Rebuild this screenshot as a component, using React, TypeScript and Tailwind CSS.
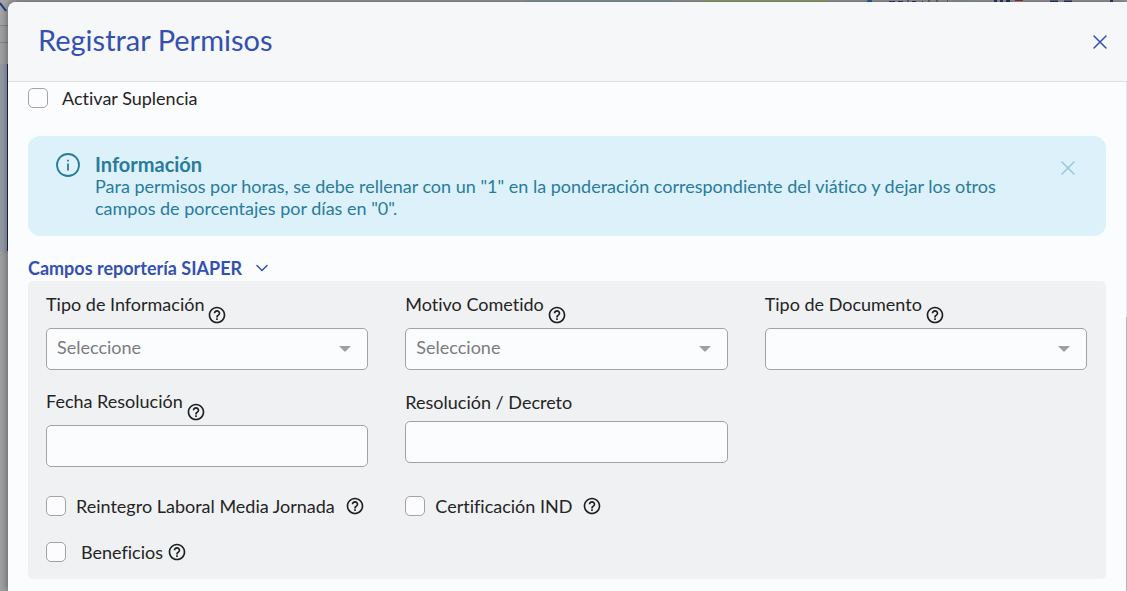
import { useState } from "react";
import type { ReactNode } from "react";
import { MdHelpOutline } from "react-icons/md";

type FieldProps = {
  id: string;
  label: string;
  help?: boolean;
  children: ReactNode;
};

const Help = () => (
  <MdHelpOutline aria-hidden="true" className="size-5 shrink-0 text-[#1f1f1f]" />
);

const CloseIcon = ({ className }: { className: string }) => (
  <svg viewBox="0 0 14 14" fill="none" stroke="currentColor" strokeWidth="1.500" strokeLinecap="round" className={className}>
    <path d="M1 1 13 13M13 1 1 13" />
  </svg>
);

const Field = ({ id, label, help, children }: FieldProps) => (
  <div>
    {help ? (
      <div className="mb-[3px] flex h-[31px] gap-[3px]">
        <label htmlFor={id} className="leading-5">{label}</label>
        <span className="self-end"><Help /></span>
      </div>
    ) : (
      <label htmlFor={id} className="mb-2 block leading-[22px]">{label}</label>
    )}
    {children}
  </div>
);

const SelectBox = ({ id, placeholder }: { id: string; placeholder?: string }) => (
  <div className="relative">
    <select
      id={id}
      className="block h-[42px] w-full appearance-none rounded-[5px] border border-[#a3a3a5] bg-[#fbfcfe] pr-10 pb-1 pl-[10px] text-[#7b7b7d] outline-none"
    >
      <option>{placeholder}</option>
    </select>
    <svg viewBox="0 0 12 6" className="pointer-events-none absolute top-[18px] right-[17px] h-1.5 w-3 fill-[#a0a0a2]">
      <path d="M0 0h12L6 6z" />
    </svg>
  </div>
);

const TextBox = ({ id }: { id: string }) => (
  <input
    id={id}
    type="text"
    className="block h-[42px] w-full rounded-[5px] border border-[#a3a3a5] bg-[#fbfcfe] px-[10px] outline-none"
  />
);

const Check = ({ id }: { id: string }) => (
  <input
    id={id}
    type="checkbox"
    className="size-5 shrink-0 appearance-none rounded-[5px] border border-[#a3a3a5] bg-[#fcfcfe] checked:bg-[#3450b0]"
  />
);

// Dimmed page that shows around the drawer
const Backdrop = () => (
  <div aria-hidden="true" className="absolute inset-0 overflow-hidden bg-[#a2a2a2]">
    <svg className="absolute top-0 left-0 h-full w-2" fill="none">
      <rect width="8" height="25" fill="#a6a6a7" />
      <path d="M0 3 6 11" stroke="#263a80" strokeWidth="2" />
      <path d="M0 25.500h8M0 42.500h8" stroke="#868687" />
      <rect y="64" width="8" height="188" rx="1" fill="#969aa6" />
      <path d="M7.500 64v187" stroke="#1e2a62" />
      <path d="M0 256q3-3 8-4" stroke="#969696" />
    </svg>
    <svg className="absolute top-0 right-0 h-[2px] w-[605px]">
      <rect x="4" width="147" height="2" fill="#8fa3a6" />
      <rect x="180" width="126" height="2" fill="#9bac7a" />
      <path d="M344 2 346 0h4v2z" fill="#2669b4" />
      <path d="M367 1.500h6M376 1.500h5M385 1h2M390 1.500h4M400 1.500h1M406 1h2M414 1h2M425 1h1" stroke="#293a78" />
      <rect x="430" width="22" height="2" fill="#98a3a5" />
      <path d="M472 1h3M478 1h3M484 1h4M528 1.500h8M542 1.500h8M588 1h3" stroke="#293a78" strokeWidth="2" />
      <path d="M493 .5h8" stroke="#a52b37" />
    </svg>
  </div>
);

export default function App() {
  const [showInfo, setShowInfo] = useState(true);
  const [open, setOpen] = useState(true);

  return (
    <div className="relative min-h-screen pt-[2px] pl-2 font-[Lato,sans-serif] text-[18px] text-[#242424] [font-variant-ligatures:none]">
      <Backdrop />
      <section
        role="dialog"
        aria-labelledby="title"
        className="relative min-h-[calc(100vh-2px)] rounded-tl-lg bg-[#fbfcfe] shadow-[0_0_9px_rgba(0,0,0,0.5)]"
      >
        <header className="flex h-20 items-center justify-between rounded-tl-lg border-b border-[#dee0e4] bg-[#f6f7f9] pr-5 pl-[30px]">
          <h1 id="title" className="pb-1 text-[29px] leading-9 text-[#3450b0]">Registrar Permisos</h1>
          <button type="button" aria-label="Cerrar" className="text-[#3450b0]">
            <CloseIcon className="size-[14px]" />
          </button>
        </header>

        <div className="flex">
          <main className="min-w-0 grow px-5 pt-1.5 pb-3">
            <div className="flex h-5 items-center gap-[14px]">
              <Check id="suplencia" />
              <label htmlFor="suplencia">Activar Suplencia</label>
            </div>

            {showInfo && (
              <div role="status" className="mt-7 flex rounded-xl bg-[#dcf1fa] pt-[17px] pr-[31px] pb-[17px] pl-7 text-[#2a7b9b]">
                <svg viewBox="0 0 24 24" fill="none" stroke="currentColor" className="mr-[15px] size-6 shrink-0">
                  <circle cx="12" cy="12" r="11" strokeWidth="1.800" />
                  <path d="M12 10.500v7" strokeWidth="1.800" />
                  <path d="M12 6.800v1.800" strokeWidth="1.800" />
                </svg>
                <div className="grow leading-[22px]">
                  <h2 className="text-[20px] leading-[22px] font-bold">Información</h2>
                  <p className="max-w-[920px]">
                    Para permisos por horas, se debe rellenar con un "1" en la ponderación correspondiente del viático y dejar los otros campos de porcentajes por días en "0".
                  </p>
                </div>
                <button type="button" aria-label="Cerrar aviso" onClick={() => setShowInfo(false)} className="mt-2 ml-4 self-start text-[#9cc6d8]">
                  <CloseIcon className="size-[14px]" />
                </button>
              </div>
            )}

            <button
              type="button"
              aria-expanded={open}
              onClick={() => setOpen(!open)}
              className="mt-5 mb-[1px] flex h-6 items-center gap-[14px] font-bold text-[#3450b0]"
            >
              Campos reportería SIAPER
              <svg viewBox="0 0 12 8" fill="none" stroke="currentColor" strokeWidth="1.500" strokeLinecap="round" className="h-2 w-3">
                <path d="M1 1.500 6 6.500 11 1.500" />
              </svg>
            </button>

            {open && (
              <div className="rounded-[5px] bg-[#f0f1f3] pt-[13px] pr-[19px] pb-[17px] pl-[18px]">
                <div className="grid grid-cols-3 gap-x-[37px] gap-y-[21px]">
                  <Field id="tipoInfo" label="Tipo de Información" help>
                    <SelectBox id="tipoInfo" placeholder="Seleccione" />
                  </Field>
                  <Field id="motivo" label="Motivo Cometido" help>
                    <SelectBox id="motivo" placeholder="Seleccione" />
                  </Field>
                  <Field id="tipoDoc" label="Tipo de Documento" help>
                    <SelectBox id="tipoDoc" />
                  </Field>
                  <Field id="fecha" label="Fecha Resolución" help>
                    <TextBox id="fecha" />
                  </Field>
                  <Field id="decreto" label="Resolución / Decreto">
                    <TextBox id="decreto" />
                  </Field>
                </div>

                <div className="mt-[29px] grid grid-cols-3 gap-x-[37px] gap-y-[26px]">
                  <div className="flex h-5 items-center gap-[10px]">
                    <Check id="reintegro" />
                    <label htmlFor="reintegro" className="whitespace-nowrap">Reintegro Laboral Media Jornada</label>
                    <Help />
                  </div>
                  <div className="flex h-5 items-center gap-[10px]">
                    <Check id="ind" />
                    <label htmlFor="ind">Certificación IND</label>
                    <Help />
                  </div>
                  <div className="col-start-1 flex h-5 items-center">
                    <Check id="beneficios" />
                    <label htmlFor="beneficios" className="mr-1 ml-[15px]">Beneficios</label>
                    <Help />
                  </div>
                </div>
              </div>
            )}
          </main>
          <div aria-hidden="true" className="w-px shrink-0 bg-[#e4e6ea] pt-[235px]">
            <div className="h-full bg-[#b4b4b6]" />
          </div>
        </div>
      </section>
    </div>
  );
}
